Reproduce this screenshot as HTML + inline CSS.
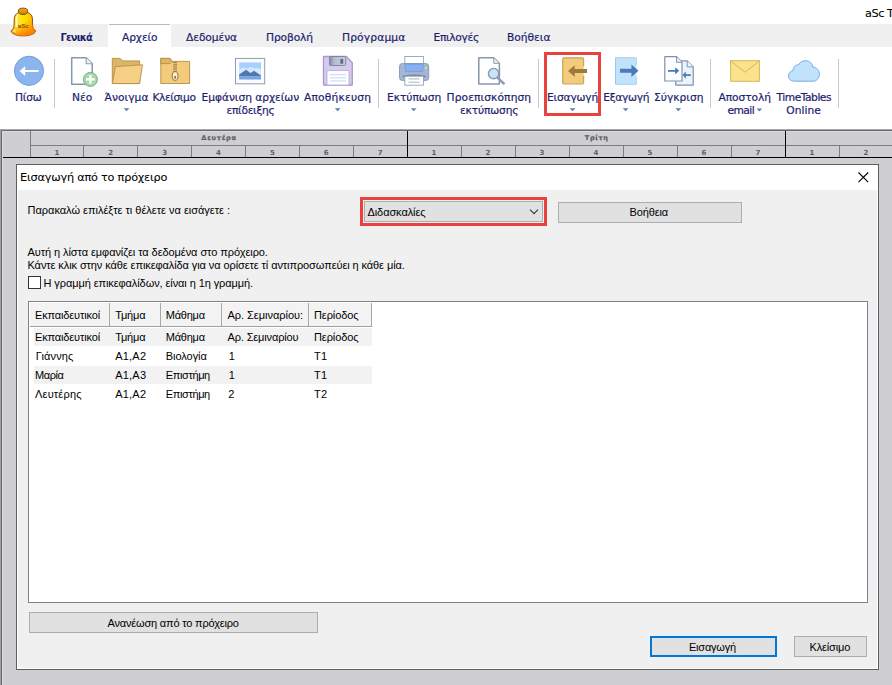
<!DOCTYPE html>
<html lang="el">
<head>
<meta charset="utf-8">
<title>aSc TimeTables</title>
<style>
html,body{margin:0;padding:0;}
body{width:892px;height:685px;overflow:hidden;position:relative;background:#fff;font-family:"Liberation Sans","DejaVu Sans",sans-serif;}
.a{position:absolute;}
svg{position:absolute;overflow:visible;}
.t{position:absolute;white-space:nowrap;color:#000;}
.fl{font-family:"Liberation Sans","DejaVu Sans",sans-serif;}
.fc{font-family:"DejaVu Sans Condensed","Liberation Sans",sans-serif;}
.fd{font-family:"DejaVu Sans","Liberation Sans",sans-serif;-webkit-text-stroke:0.2px currentColor;}
.sep{position:absolute;top:59px;width:1px;height:49px;background:#c8c8c8;}
.dd{position:absolute;width:0;height:0;border-left:3px solid transparent;border-right:3px solid transparent;border-top:3px solid #5f83b9;}
.gn{position:absolute;top:148.8px;width:20px;text-align:center;font-size:7px;line-height:9px;font-weight:bold;color:#606060;font-family:"DejaVu Sans","Liberation Sans",sans-serif;}
.gd{position:absolute;top:134px;width:60px;text-align:center;font-size:6.5px;line-height:9px;font-weight:bold;color:#7d7d7d;letter-spacing:0.5px;font-family:"Liberation Sans","DejaVu Sans",sans-serif;}
.btn{position:absolute;box-sizing:border-box;background:#e1e1e1;border:1px solid #adadad;}
.vl{position:absolute;top:146px;width:1px;height:11px;background:#7d7d7d;}
.hs{position:absolute;top:303px;width:1px;height:23px;background:#a8a8a8;}
</style>
</head>
<body>
<div class="a" style="left:0;top:24px;width:892px;height:23px;background:#f0f0f0;"></div>
<div class="a" style="left:108px;top:24px;width:63px;height:23px;background:#fff;"></div>
<div class="a" style="left:109px;top:24px;width:61px;height:1px;background:#b9b9b9;"></div>
<div class="sep" style="left:54px;"></div>
<div class="sep" style="left:378px;"></div>
<div class="sep" style="left:538px;"></div>
<div class="sep" style="left:710px;"></div>
<div class="sep" style="left:838px;"></div>
<div class="a" style="left:0;top:129px;width:892px;height:1px;background:#a8a8a8;"></div>
<div class="a" style="left:0;top:130px;width:892px;height:555px;background:#cfced3;"></div>
<div class="a" style="left:0;top:130px;width:892px;height:1px;background:#696969;"></div>
<div class="a" style="left:0;top:130px;width:1px;height:555px;background:#a0a0a0;"></div>
<div class="a" style="left:1px;top:130px;width:1px;height:555px;background:#696969;"></div>
<div class="a" style="left:2px;top:131px;width:1px;height:554px;background:#dcdce0;"></div>
<div class="a" style="left:2px;top:131px;width:890px;height:1px;background:#dcdce0;"></div>
<div class="a" style="left:30px;top:145px;width:862px;height:1px;background:#7d7d7d;"></div>
<div class="gn" style="left:46.9px;">1</div>
<div class="vl" style="left:83px;"></div>
<div class="gn" style="left:100.8px;">2</div>
<div class="vl" style="left:137px;"></div>
<div class="gn" style="left:154.6px;">3</div>
<div class="vl" style="left:191px;"></div>
<div class="gn" style="left:208.5px;">4</div>
<div class="vl" style="left:245px;"></div>
<div class="gn" style="left:262.4px;">5</div>
<div class="vl" style="left:299px;"></div>
<div class="gn" style="left:316.2px;">6</div>
<div class="vl" style="left:353px;"></div>
<div class="gn" style="left:370.1px;">7</div>
<div class="gn" style="left:424.0px;">1</div>
<div class="vl" style="left:461px;"></div>
<div class="gn" style="left:478.0px;">2</div>
<div class="vl" style="left:515px;"></div>
<div class="gn" style="left:532.0px;">3</div>
<div class="vl" style="left:569px;"></div>
<div class="gn" style="left:586.0px;">4</div>
<div class="vl" style="left:623px;"></div>
<div class="gn" style="left:640.0px;">5</div>
<div class="vl" style="left:677px;"></div>
<div class="gn" style="left:694.0px;">6</div>
<div class="vl" style="left:731px;"></div>
<div class="gn" style="left:748.0px;">7</div>
<div class="gn" style="left:802.0px;">1</div>
<div class="vl" style="left:839px;"></div>
<div class="gn" style="left:856.0px;">2</div>
<div class="a" style="left:30px;top:131px;width:1px;height:26px;background:#7d7d7d;"></div>
<div class="a" style="left:407px;top:131px;width:1px;height:26px;background:#000;"></div>
<div class="a" style="left:785px;top:131px;width:1px;height:26px;background:#000;"></div>
<div class="a" style="left:3px;top:157px;width:889px;height:1px;background:#000;"></div>
<svg style="left:0;top:0;" width="892" height="130" viewBox="0 0 892 130">
<defs>
<linearGradient id="gb" x1="0" y1="0" x2="1" y2="0"><stop offset="0" stop-color="#eba400"/><stop offset="0.2" stop-color="#ffe838"/><stop offset="0.5" stop-color="#ffe100"/><stop offset="0.8" stop-color="#ffc400"/><stop offset="1" stop-color="#f59a00"/></linearGradient>
<linearGradient id="gb2" x1="0" y1="0" x2="1" y2="1"><stop offset="0" stop-color="#ffe93a"/><stop offset="0.5" stop-color="#ffc400"/><stop offset="1" stop-color="#ff8a00"/></linearGradient>
<linearGradient id="gk" x1="0" y1="0" x2="0" y2="1"><stop offset="0" stop-color="#f5b020"/><stop offset="1" stop-color="#c07c00"/></linearGradient>
<linearGradient id="gsh" x1="0" y1="0" x2="1" y2="0"><stop offset="0" stop-color="#7f8ba5"/><stop offset="0.3" stop-color="#b4bdcf"/><stop offset="1" stop-color="#c6cddc"/></linearGradient>
<linearGradient id="gv" x1="0" y1="0" x2="0.35" y2="1"><stop offset="0.55" stop-color="#ff8a00" stop-opacity="0"/><stop offset="0.8" stop-color="#ff8a00" stop-opacity="0.6"/><stop offset="1" stop-color="#ff7a00" stop-opacity="0.9"/></linearGradient>
</defs>
<!-- bell -->
<path d="M11.2 30.6 C13 29.4 14 28 14.1 25.5 L14.3 19 C14.4 14.5 17.5 11.8 23.2 11.8 C28.9 11.8 32.3 14.5 32.4 19 L32.6 25.5 C32.7 28 33.8 29.4 35.6 30.6 C36.2 33 31 35.9 23.4 35.9 C15.8 35.9 10.6 33 11.2 30.6 Z" fill="url(#gb)" stroke="#8c4a12" stroke-width="1"/>
<path d="M11.2 30.6 C13 29.4 14 28 14.1 25.5 L14.3 19 C14.4 14.5 17.5 11.8 23.2 11.8 C28.9 11.8 32.3 14.5 32.4 19 L32.6 25.5 C32.7 28 33.8 29.4 35.6 30.6 C36.2 33 31 35.9 23.4 35.9 C15.8 35.9 10.6 33 11.2 30.6 Z" fill="url(#gv)"/>
<path d="M12.6 31 C13.6 29.8 14.6 29.4 15.4 28.4 L15.8 32.6 C14 32.3 13 31.8 12.6 31 Z" fill="#fff27a" opacity="0.8"/>
<path d="M15.6 27 L15.7 19 C15.8 16.5 16.8 14.8 18.3 13.9 C17.6 15.5 17.4 17.5 17.4 19.5 L17.3 27 Z" fill="#fffbe0" opacity="0.85"/>
<ellipse cx="23" cy="11.3" rx="4.7" ry="3.2" fill="url(#gk)" stroke="#8c4a12" stroke-width="1"/>
<text x="23.2" y="28.2" font-size="6.2" font-weight="bold" text-anchor="middle" fill="#8a4a14" font-family="Liberation Sans, sans-serif">aSc</text>
<!-- back -->
<circle cx="29" cy="70.8" r="14.6" fill="#8bb5ef" stroke="#6f93d6" stroke-width="0.9"/>
<path d="M38.6 70 H25.2 V66 L19.6 71 L25.2 76 V72 H38.6 Z" fill="#fff"/>
<!-- new -->
<path d="M71.7 57.7 H86.2 L92.2 63.7 V84.2 H71.7 Z" fill="#fff" stroke="#8797ad" stroke-width="1.5" stroke-linejoin="round"/>
<path d="M86.2 57.7 V63.7 H92.2" fill="#eef2f7" stroke="#8e9db3" stroke-width="1.1" stroke-linejoin="round"/>
<circle cx="90.4" cy="79.4" r="7" fill="#a9d6ab" stroke="#72b078" stroke-width="1"/>
<path d="M90.4 75 V83.8 M86 79.4 H94.8" stroke="#fff" stroke-width="2.4"/>
<!-- open folder -->
<path d="M112.3 58.4 H120.2 L122.6 60.9 H139.6 V83.5 H112.3 Z" fill="#dcb565" stroke="#b48f44" stroke-width="0.9" stroke-linejoin="round"/>
<path d="M115.4 66.6 L142.5 64.8 L139.6 83.6 H112.3 Z" fill="#f4cf84" stroke="#b48f44" stroke-width="0.9" stroke-linejoin="round"/>
<!-- close folder (zip) -->
<path d="M160.8 58.4 H170 L172.2 61.4 H189.6 V83.5 H160.8 Z" fill="#f2cb7c" stroke="#b48f44" stroke-width="0.9" stroke-linejoin="round"/>
<path d="M160.8 58.4 H170 L172.2 61.4 L170 63.6 H160.8 Z" fill="#dcb565" stroke="#b48f44" stroke-width="0.9" stroke-linejoin="round"/>
<path d="M173.2 62.5 H177 M173.2 64.3 H177 M173.2 66.1 H177 M173.2 67.9 H177 M173.2 69.7 H177 M173.2 71.5 H177" stroke="#8f6f35" stroke-width="0.8"/>
<ellipse cx="175.1" cy="76" rx="2.9" ry="4.3" fill="#fdf3d8" stroke="#8f6f35" stroke-width="1"/>
<ellipse cx="175.1" cy="77.3" rx="1" ry="1.5" fill="#8f6f35"/>
<!-- picture -->
<rect x="235.5" y="58.4" width="29.2" height="25.4" fill="#f9fbfd" stroke="#8e9db3" stroke-width="1"/>
<rect x="239.2" y="62.4" width="21.8" height="17" fill="#a9d0fd"/>
<path d="M239.2 69.5 C242 67 245 67.5 247 68.8 C249 67 252 66.5 254.5 68.2 C257 67.5 259.5 68 261 69.5 V76 H239.2 Z" fill="#d3e9ff"/>
<path d="M239.2 74.5 L246 69.8 L250.5 73 L254 70.8 L261 75.6 V76.3 H239.2 Z" fill="#4f79ab"/>
<rect x="239.2" y="76.2" width="21.8" height="3.2" fill="#78a6e3"/>
<!-- save -->
<path d="M323.5 56.5 H346.3 L352.3 62.8 V85 H323.5 Z" fill="#d6caee" stroke="#ad97d0" stroke-width="1.3" stroke-linejoin="round"/>
<rect x="329.5" y="56.5" width="16.2" height="9" rx="1.2" fill="url(#gsh)" stroke="#75829b" stroke-width="0.9"/>
<rect x="340.4" y="59" width="2.8" height="4.7" fill="#5c6c8c"/>
<rect x="327" y="70.7" width="22" height="14.3" fill="#fff" stroke="#b39fd3" stroke-width="0.7"/>
<path d="M330 74.7 H346 M330 77.8 H346 M330 80.9 H346" stroke="#c9e1f8" stroke-width="1.2"/>
<!-- printer -->
<rect x="404.8" y="56.5" width="18.6" height="9" fill="#fff" stroke="#93a3bb" stroke-width="0.9"/>
<rect x="399.5" y="63.5" width="29.2" height="17" rx="3" fill="#a6b6ce" stroke="#8296b4" stroke-width="0.9"/>
<path d="M404.8 64.3 H423.4 L422.6 71.6 H405.6 Z" fill="#86b0f1" stroke="#6f97db" stroke-width="0.7"/>
<circle cx="425.8" cy="68" r="1" fill="#ffe27a"/>
<ellipse cx="414.1" cy="76.4" rx="11.8" ry="1.8" fill="#71819f"/>
<rect x="404.8" y="76.2" width="18.6" height="9" fill="#fff" stroke="#93a3bb" stroke-width="0.9"/>
<path d="M408.5 78.9 H419.6 M408.5 82.2 H419.6" stroke="#a6b2c6" stroke-width="1"/>
<!-- preview -->
<path d="M478.8 57.8 H493.8 L499.4 63.4 V84 H478.8 Z" fill="#fff" stroke="#8797ad" stroke-width="1.5" stroke-linejoin="round"/>
<path d="M493.8 57.8 V63.4 H499.4" fill="#e9eef5" stroke="#8e9db3" stroke-width="1" stroke-linejoin="round"/>
<path d="M497.4 77.7 L503.8 83.5" stroke="#8e9db3" stroke-width="2.4" stroke-linecap="round"/>
<circle cx="493.6" cy="73.6" r="5.2" fill="#cbe3fa" stroke="#8797ad" stroke-width="1.4"/>
<!-- import -->
<path d="M583.6 66.2 V59 Q583.6 57.8 582.4 57.8 H563.9 Q562.7 57.8 562.7 59 V82.8 Q562.7 84 563.9 84 H582.4 Q583.6 84 583.6 82.8 V75.8" fill="#f4ca7c" stroke="#c9a456" stroke-width="1.2"/>
<path d="M587 69 H574.7 V65.3 L568 71 L574.7 76.7 V73 H587 Z" fill="#9a7b3c"/>
<!-- export -->
<path d="M636.3 65 V57.8 H615.5 V84.2 H636.3 V77" fill="#c0e3fb" stroke="#9fc6ee" stroke-width="1"/>
<rect x="616" y="58.3" width="20.3" height="25.4" fill="#c0e3fb"/>
<path d="M620 68.8 H631.4 V64.6 L638.5 70.8 L631.4 77 V72.8 H620 Z" fill="#4b79b9"/>
<!-- compare -->
<path d="M675.8 60.9 H687.2 L693.2 66.9 V85.1 H675.8 Z" fill="#eaf4fd" stroke="#8191a8" stroke-width="1.2" stroke-linejoin="round"/>
<path d="M687.2 60.9 V66.9 H693.2" fill="#f4f8fc" stroke="#8191a8" stroke-width="1" stroke-linejoin="round"/>
<path d="M664.8 56.7 H676.6 L682 62.1 V81 H664.8 Z" fill="#fdfeff" stroke="#8191a8" stroke-width="1.2" stroke-linejoin="round"/>
<path d="M676.6 56.7 V62.3 H682" fill="#eef2f7" stroke="#8191a8" stroke-width="1" stroke-linejoin="round"/>
<path d="M668 70 H675.2 V67.2 L679.2 70.85 L675.2 74.5 V71.8 H668 Z" fill="#4b79b9"/>
<path d="M690.8 74.2 H685.8 V71.4 L682.6 75.1 L685.8 78.8 V76 H690.8 Z" fill="#4b79b9"/>
<!-- email -->
<rect x="730.6" y="60.7" width="28.8" height="20.6" fill="#fbe38c" stroke="#d6b65e" stroke-width="1"/>
<path d="M730.6 61 L745 72.2 L759.4 61" fill="none" stroke="#d6b65e" stroke-width="1"/>
<!-- cloud -->
<path d="M794.5 81.2 C790.5 81.2 788.5 78.6 788.5 76 C788.5 73 790.8 71 793 70.8 C793 67 795.5 64.5 798.6 64.8 C800 61.8 803 60.6 806 60.8 C810 61 812.6 64 812.8 67.2 C816.5 67.2 819.4 70.3 819.4 74.2 C819.4 78.3 816.5 81.2 813 81.2 Z" fill="#c0e3fb" stroke="#7ba9e1" stroke-width="1"/>
<!-- dropdown arrows -->
<g fill="#5d7fb6">
<path d="M123.6 108.2 H129.4 L126.5 111.2 Z"/>
<path d="M334.8 108.2 H340.6 L337.7 111.2 Z"/>
<path d="M410.8 108.2 H416.6 L413.7 111.2 Z"/>
<path d="M569.6 108.2 H575.4 L572.5 111.2 Z"/>
<path d="M622.7 108.2 H628.5 L625.6 111.2 Z"/>
<path d="M675.4 108.2 H681.2 L678.3 111.2 Z"/>
<path d="M756.6 108.4 H762.2 L759.4 111.4 Z"/>
</g>
<!-- red highlight -->
<rect x="545.5" y="53.5" width="54" height="61" fill="none" stroke="#e8433f" stroke-width="3"/>
</svg>

<div class="a" style="left:16px;top:164px;width:863px;height:506px;background:#f0f0f0;border:1px solid #5e5e5e;box-sizing:border-box;"></div>
<div class="a" style="left:17px;top:165px;width:861px;height:504px;box-sizing:border-box;border:1px solid #fff;"></div>
<div class="a" style="left:17px;top:165px;width:861px;height:25px;background:#fff;"></div>
<svg style="left:858px;top:171.5px;" width="12" height="12" viewBox="0 0 12 12"><path d="M0.5 0.5 L10.2 10.2 M10.2 0.5 L0.5 10.2" stroke="#000" stroke-width="1.1" fill="none"/></svg>
<div class="a" style="left:360px;top:197px;width:187px;height:29px;box-sizing:border-box;border:3px solid #e8423f;"></div>
<div class="btn" style="left:364px;top:201px;width:179px;height:21px;"></div>
<svg style="left:0;top:0;" width="892" height="685" viewBox="0 0 892 685"><path d="M530 209.7 L534 213.7 L538 209.7" stroke="#3c3c3c" stroke-width="1.2" fill="none"/></svg>
<div class="btn" style="left:558px;top:202px;width:184px;height:21px;"></div>
<div class="a" style="left:28px;top:276px;width:13px;height:13px;box-sizing:border-box;border:1px solid #333;background:#fff;"></div>
<div class="a" style="left:28px;top:301px;width:840px;height:302px;box-sizing:border-box;border:1px solid #7a8292;background:#fff;"></div>
<div class="a" style="left:30px;top:303px;width:342px;height:23px;background:#f3f3f3;"></div>
<div class="a" style="left:30px;top:326px;width:342px;height:1px;background:#a0a0a0;"></div>
<div class="hs" style="left:109px;"></div>
<div class="hs" style="left:160px;"></div>
<div class="hs" style="left:221px;"></div>
<div class="hs" style="left:308px;"></div>
<div class="hs" style="left:371px;"></div>
<div class="a" style="left:34px;top:328px;width:338px;height:18px;background:#f2f2f2;"></div>
<div class="a" style="left:34px;top:366px;width:338px;height:18px;background:#f2f2f2;"></div>
<div class="btn" style="left:29px;top:612px;width:289px;height:21px;"></div>
<div class="btn" style="left:650px;top:636px;width:127px;height:21px;border:2px solid #0078d7;"></div>
<div class="btn" style="left:794px;top:636px;width:73px;height:21px;"></div>
<div class="t fd" style="left:865.0px;top:6.6px;font-size:11.3px;line-height:13px;letter-spacing:-0.46px;-webkit-text-stroke:0.08px #000;">aSc T</div>
<div class="t fc" style="left:60.5px;top:31.2px;font-size:11px;line-height:13px;letter-spacing:-0.81px;color:#1e1e6e;font-weight:bold;">Γενικά</div>
<div class="t fd" style="left:122.0px;top:31.8px;font-size:10.7px;line-height:12px;letter-spacing:-0.12px;color:#1e1e6e;">Αρχείο</div>
<div class="t fd" style="left:186.0px;top:31.8px;font-size:10.7px;line-height:12px;letter-spacing:-0.10px;color:#1e1e6e;">Δεδομένα</div>
<div class="t fd" style="left:266.0px;top:31.8px;font-size:10.7px;line-height:12px;letter-spacing:-0.12px;color:#1e1e6e;">Προβολή</div>
<div class="t fd" style="left:342.0px;top:31.8px;font-size:10.7px;line-height:12px;letter-spacing:0.15px;color:#1e1e6e;">Πρόγραμμα</div>
<div class="t fd" style="left:433.5px;top:31.8px;font-size:10.7px;line-height:12px;letter-spacing:-0.32px;color:#1e1e6e;">Επιλογές</div>
<div class="t fd" style="left:507.0px;top:31.8px;font-size:10.7px;line-height:12px;letter-spacing:-0.02px;color:#1e1e6e;">Βοήθεια</div>
<div class="t fd" style="left:15.0px;top:91.6px;font-size:10.7px;line-height:12px;letter-spacing:-0.22px;color:#1e1e6e;">Πίσω</div>
<div class="t fd" style="left:72.0px;top:91.6px;font-size:10.7px;line-height:12px;letter-spacing:-0.04px;color:#1e1e6e;">Νέο</div>
<div class="t fd" style="left:104.5px;top:91.6px;font-size:10.7px;line-height:12px;letter-spacing:0.04px;color:#1e1e6e;">Άνοιγμα</div>
<div class="t fd" style="left:152.5px;top:91.6px;font-size:10.7px;line-height:12px;letter-spacing:-0.43px;color:#1e1e6e;">Κλείσιμο</div>
<div class="t fd" style="left:201.5px;top:91.6px;font-size:10.7px;line-height:12px;letter-spacing:-0.05px;color:#1e1e6e;">Εμφάνιση αρχείων</div>
<div class="t fd" style="left:226.5px;top:104.8px;font-size:10.7px;line-height:12px;letter-spacing:-0.31px;color:#1e1e6e;">επίδειξης</div>
<div class="t fd" style="left:304.0px;top:91.6px;font-size:10.7px;line-height:12px;letter-spacing:0.18px;color:#1e1e6e;">Αποθήκευση</div>
<div class="t fd" style="left:387.0px;top:91.6px;font-size:10.7px;line-height:12px;letter-spacing:-0.05px;color:#1e1e6e;">Εκτύπωση</div>
<div class="t fd" style="left:446.5px;top:91.6px;font-size:10.7px;line-height:12px;letter-spacing:0.09px;color:#1e1e6e;">Προεπισκόπηση</div>
<div class="t fd" style="left:460.0px;top:104.8px;font-size:10.7px;line-height:12px;letter-spacing:-0.16px;color:#1e1e6e;">εκτύπωσης</div>
<div class="t fd" style="left:547.0px;top:91.6px;font-size:10.7px;line-height:12px;letter-spacing:-0.20px;color:#1e1e6e;">Εισαγωγή</div>
<div class="t fd" style="left:603.2px;top:91.6px;font-size:10.7px;line-height:12px;letter-spacing:-0.31px;color:#1e1e6e;">Εξαγωγή</div>
<div class="t fd" style="left:654.0px;top:91.6px;font-size:10.7px;line-height:12px;letter-spacing:-0.00px;color:#1e1e6e;">Σύγκριση</div>
<div class="t fd" style="left:718.5px;top:91.6px;font-size:10.7px;line-height:12px;letter-spacing:-0.08px;color:#1e1e6e;">Αποστολή</div>
<div class="t fd" style="left:727.5px;top:104.8px;font-size:10.7px;line-height:12px;letter-spacing:-0.56px;color:#1e1e6e;">email</div>
<div class="t fd" style="left:776.5px;top:91.6px;font-size:10.7px;line-height:12px;letter-spacing:-0.48px;color:#1e1e6e;">TimeTables</div>
<div class="t fd" style="left:786.2px;top:104.8px;font-size:10.7px;line-height:12px;letter-spacing:0.05px;color:#1e1e6e;">Online</div>
<div class="t fd" style="left:201.3px;top:134.3px;font-size:6.6px;line-height:8px;letter-spacing:0.73px;color:#5e5e5e;font-weight:bold;">Δευτέρα</div>
<div class="t fd" style="left:584.8px;top:134.3px;font-size:6.6px;line-height:8px;letter-spacing:0.64px;color:#5e5e5e;font-weight:bold;">Τρίτη</div>
<div class="t fd" style="left:20.1px;top:170.6px;font-size:11.3px;line-height:13px;letter-spacing:-0.23px;-webkit-text-stroke:0.08px #000;">Εισαγωγή από το πρόχειρο</div>
<div class="t fl" style="left:27.5px;top:204.2px;font-size:11px;line-height:12px;letter-spacing:-0.01px;">Παρακαλώ επιλέξτε τι θέλετε να εισάγετε :</div>
<div class="t fl" style="left:367.5px;top:205.7px;font-size:11px;line-height:12px;letter-spacing:-0.09px;">Διδασκαλίες</div>
<div class="t fl" style="left:629.5px;top:206.2px;font-size:11px;line-height:12px;letter-spacing:-0.13px;">Βοήθεια</div>
<div class="t fl" style="left:27.5px;top:246.2px;font-size:11px;line-height:12px;letter-spacing:-0.07px;">Αυτή η λίστα εμφανίζει τα δεδομένα στο πρόχειρο.</div>
<div class="t fl" style="left:27.5px;top:259.2px;font-size:11px;line-height:12px;letter-spacing:-0.09px;">Κάντε κλικ στην κάθε επικεφαλίδα για να ορίσετε τί αντιπροσωπεύει η κάθε μία.</div>
<div class="t fl" style="left:43.5px;top:277.2px;font-size:11px;line-height:12px;letter-spacing:-0.09px;">Η γραμμή επικεφαλίδων, είναι η 1η γραμμή.</div>
<div class="t fl" style="left:35.0px;top:309.2px;font-size:11px;line-height:12px;letter-spacing:-0.14px;">Εκπαιδευτικοί</div>
<div class="t fl" style="left:115.2px;top:309.2px;font-size:11px;line-height:12px;letter-spacing:-0.17px;">Τμήμα</div>
<div class="t fl" style="left:165.8px;top:309.2px;font-size:11px;line-height:12px;letter-spacing:-0.24px;">Μάθημα</div>
<div class="t fl" style="left:227.5px;top:309.2px;font-size:11px;line-height:12px;letter-spacing:-0.03px;">Αρ. Σεμιναρίου:</div>
<div class="t fl" style="left:314.0px;top:309.2px;font-size:11px;line-height:12px;letter-spacing:-0.09px;">Περίοδος</div>
<div class="t fl" style="left:35.0px;top:331.2px;font-size:11px;line-height:12px;letter-spacing:-0.14px;">Εκπαιδευτικοί</div>
<div class="t fl" style="left:115.2px;top:331.2px;font-size:11px;line-height:12px;letter-spacing:-0.17px;">Τμήμα</div>
<div class="t fl" style="left:165.8px;top:331.2px;font-size:11px;line-height:12px;letter-spacing:-0.24px;">Μάθημα</div>
<div class="t fl" style="left:227.5px;top:331.2px;font-size:11px;line-height:12px;letter-spacing:-0.14px;">Αρ. Σεμιναρίου</div>
<div class="t fl" style="left:314.0px;top:331.2px;font-size:11px;line-height:12px;letter-spacing:-0.09px;">Περίοδος</div>
<div class="t fl" style="left:35.8px;top:350.2px;font-size:11px;line-height:12px;letter-spacing:0.13px;">Γιάννης</div>
<div class="t fl" style="left:115.2px;top:350.2px;font-size:11px;line-height:12px;letter-spacing:0.21px;">Α1,Α2</div>
<div class="t fl" style="left:165.8px;top:350.2px;font-size:11px;line-height:12px;letter-spacing:-0.06px;">Βιολογία</div>
<div class="t fl" style="left:228.8px;top:350.2px;font-size:11px;line-height:12px;letter-spacing:0.00px;">1</div>
<div class="t fl" style="left:314.0px;top:350.2px;font-size:11px;line-height:12px;letter-spacing:0.20px;">Τ1</div>
<div class="t fl" style="left:35.0px;top:369.2px;font-size:11px;line-height:12px;letter-spacing:-0.42px;">Μαρία</div>
<div class="t fl" style="left:115.2px;top:369.2px;font-size:11px;line-height:12px;letter-spacing:0.21px;">Α1,Α3</div>
<div class="t fl" style="left:165.8px;top:369.2px;font-size:11px;line-height:12px;letter-spacing:-0.38px;">Επιστήμη</div>
<div class="t fl" style="left:228.8px;top:369.2px;font-size:11px;line-height:12px;letter-spacing:0.00px;">1</div>
<div class="t fl" style="left:314.0px;top:369.2px;font-size:11px;line-height:12px;letter-spacing:0.20px;">Τ1</div>
<div class="t fl" style="left:35.0px;top:388.2px;font-size:11px;line-height:12px;letter-spacing:0.19px;">Λευτέρης</div>
<div class="t fl" style="left:115.2px;top:388.2px;font-size:11px;line-height:12px;letter-spacing:0.21px;">Α1,Α2</div>
<div class="t fl" style="left:165.8px;top:388.2px;font-size:11px;line-height:12px;letter-spacing:-0.38px;">Επιστήμη</div>
<div class="t fl" style="left:228.2px;top:388.2px;font-size:11px;line-height:12px;letter-spacing:0.00px;">2</div>
<div class="t fl" style="left:314.0px;top:388.2px;font-size:11px;line-height:12px;letter-spacing:0.33px;">Τ2</div>
<div class="t fl" style="left:107.5px;top:617.2px;font-size:11px;line-height:12px;letter-spacing:-0.18px;">Ανανέωση από το πρόχειρο</div>
<div class="t fl" style="left:688.9px;top:640.9px;font-size:11px;line-height:12px;letter-spacing:-0.19px;">Εισαγωγή</div>
<div class="t fl" style="left:809.5px;top:640.9px;font-size:11px;line-height:12px;letter-spacing:-0.16px;">Κλείσιμο</div>
</body>
</html>
